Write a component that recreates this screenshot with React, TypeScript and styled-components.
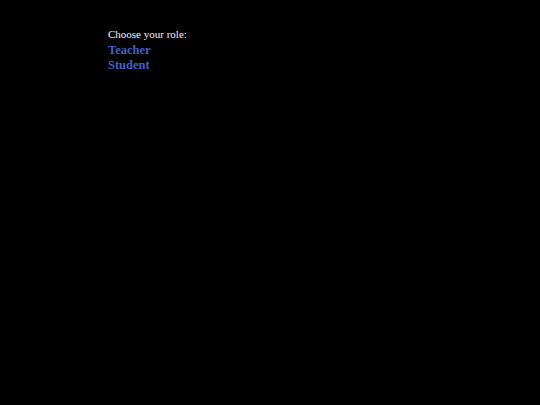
import React from 'react';
import styled, { createGlobalStyle } from 'styled-components';

const GlobalStyle = createGlobalStyle`
  html, body {
    margin: 0;
    padding: 0;
    background: #000;
  }
  body {
    font-family: "Liberation Serif", "DejaVu Serif", serif;
    color: #fff;
  }
`;

const Page = styled.div`
  min-height: 405px;
  background: #000;
  padding: 27px 0 0 108px;
  box-sizing: border-box;
`;

const Prompt = styled.div`
  font-size: 11px;
  line-height: 15px;
  margin-bottom: 1px;
  color: #f2f2f2;
`;

const RoleList = styled.div`
  display: flex;
  flex-direction: column;
`;

const RoleLink = styled.a`
  font-size: 12.5px;
  line-height: 15px;
  font-weight: bold;
  color: #4062c4;
  text-decoration: none;
  cursor: pointer;
  width: fit-content;
`;

const roles = ['Teacher', 'Student'];

const App = () => {
    return (
        <>
            <GlobalStyle />
            <Page>
                <Prompt>Choose your role:</Prompt>
                <RoleList>
                    {roles.map((role) => (
                        <RoleLink key={role} href="#">{role}</RoleLink>
                    ))}
                </RoleList>
            </Page>
        </>
    );
};

export default App;
